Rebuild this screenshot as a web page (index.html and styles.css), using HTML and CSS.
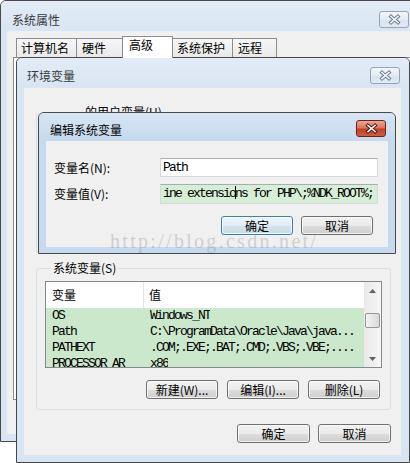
FILE: index.html
```html
<!DOCTYPE html>
<html lang="zh-CN">
<head>
    <meta charset="UTF-8">
    <meta name="viewport" content="width=device-width, initial-scale=1.0">
    <title>编辑系统变量</title>
    <link rel="stylesheet" href="styles.css">
</head>
<body>
<div class="desktop">

    <!-- 系统属性 (inactive, behind) -->
    <div class="window sys-win">
        <div class="titlebar">
            <span class="title">系统属性</span>
            <span class="close-btn">
                <svg width="13" height="11" viewBox="0 0 13 11"><path class="x-edge" d="M3 2.5 L10 8.5 M10 2.5 L3 8.5"/><path class="x-fill" d="M3 2.5 L10 8.5 M10 2.5 L3 8.5"/></svg>
            </span>
        </div>
        <div class="frame">
            <div class="client sys-client">
                <div class="tabs">
                    <span class="tab tab-name">计算机名</span>
                    <span class="tab tab-hw">硬件</span>
                    <span class="tab tab-adv selected">高级</span>
                    <span class="tab tab-prot">系统保护</span>
                    <span class="tab tab-remote">远程</span>
                </div>
                <div class="tab-panel"></div>
            </div>
        </div>
    </div>

    <!-- 环境变量 (inactive, middle) -->
    <div class="window env-win">
        <div class="titlebar">
            <span class="title">环境变量</span>
            <span class="close-btn">
                <svg width="13" height="11" viewBox="0 0 13 11"><path class="x-edge" d="M3 2.5 L10 8.5 M10 2.5 L3 8.5"/><path class="x-fill" d="M3 2.5 L10 8.5 M10 2.5 L3 8.5"/></svg>
            </span>
        </div>
        <div class="frame">
            <div class="client env-client">
                <div class="group user-group">
                    <span class="group-label">的用户变量(U)</span>
                </div>
                <div class="group sys-group">
                    <span class="group-label">系统变量(S)</span>
                    <div class="listbox">
                        <div class="list-main">
                            <div class="list-head">
                                <span class="col-name">变量</span>
                                <span class="col-value">值</span>
                            </div>
                            <div class="list-row">
                                <span class="col-name">OS</span>
                                <span class="col-value">Windows_NT</span>
                            </div>
                            <div class="list-row">
                                <span class="col-name">Path</span>
                                <span class="col-value">C:\ProgramData\Oracle\Java\java...</span>
                            </div>
                            <div class="list-row">
                                <span class="col-name">PATHEXT</span>
                                <span class="col-value">.COM;.EXE;.BAT;.CMD;.VBS;.VBE;....</span>
                            </div>
                            <div class="list-row">
                                <span class="col-name">PROCESSOR_AR</span>
                                <span class="col-value">x86</span>
                            </div>
                        </div>
                        <div class="vscroll">
                            <span class="scroll-arrow">
                                <svg width="7" height="4" viewBox="0 0 7 4"><path d="M0 4 L3.5 0 L7 4Z"/></svg>
                            </span>
                            <span class="scroll-thumb"></span>
                            <span class="scroll-track"></span>
                            <span class="scroll-arrow">
                                <svg width="7" height="4" viewBox="0 0 7 4"><path d="M0 0 L7 0 L3.5 4Z"/></svg>
                            </span>
                        </div>
                    </div>
                    <div class="actions list-actions">
                        <button class="btn" type="button">新建(W)...</button>
                        <button class="btn" type="button">编辑(I)...</button>
                        <button class="btn" type="button">删除(L)</button>
                    </div>
                </div>
                <div class="actions env-actions">
                    <button class="btn wide" type="button">确定</button>
                    <button class="btn wide" type="button">取消</button>
                </div>
            </div>
        </div>
    </div>

    <!-- 编辑系统变量 (active, front) -->
    <div class="window edit-win active">
        <div class="titlebar">
            <span class="title">编辑系统变量</span>
            <span class="close-btn close-active">
                <svg width="13" height="11" viewBox="0 0 13 11"><path class="x-edge" d="M3 2.5 L10 8.5 M10 2.5 L3 8.5"/><path class="x-fill" d="M3 2.5 L10 8.5 M10 2.5 L3 8.5"/></svg>
            </span>
        </div>
        <div class="frame">
            <div class="client edit-client">
                <div class="field-grid">
                    <span class="field-label">变量名(N):</span>
                    <div class="textbox">Path</div>
                    <span class="field-label">变量值(V):</span>
                    <div class="textbox value-box">ine extensio<span class="caret"></span>ns for PHP\;%NDK_ROOT%;</div>
                </div>
                <div class="actions edit-actions">
                    <button class="btn default" type="button">确定</button>
                    <button class="btn" type="button">取消</button>
                </div>
            </div>
        </div>
    </div>

    <div class="watermark">http://blog.csdn.net/</div>
</div>
</body>
</html>
```

FILE: styles.css
```css
html, body {
    margin: 0;
    padding: 0;
    background-color: #ffffff;
    overflow: hidden;
}

body {
    font-family: "Noto Sans CJK SC", "Noto Sans", sans-serif;
    font-size: 12px;
    color: #000;
}

.desktop {
    position: relative;
    width: 410px;
    height: 463px;
    overflow: hidden;
}

/* window chrome */
.window {
    position: absolute;
    box-sizing: border-box;
    display: flex;
    flex-direction: column;
    border: 1px solid #484848;
    border-radius: 6px 6px 0 0;
    background-color: #d8e5f2;
}

.titlebar {
    display: flex;
    align-items: flex-start;
    height: 30px;
    border-radius: 5px 5px 0 0;
    background: linear-gradient(#e3ecf6, #d8e5f2);
}

.title {
    margin-top: 11px;
    padding-left: 10px;
    line-height: 14px;
    color: #3a3a3a;
}

.close-btn {
    box-sizing: border-box;
    display: flex;
    align-items: center;
    justify-content: center;
    width: 30px;
    height: 17px;
    margin: 9px 9px 0 auto;
    border: 1px solid #94a3b5;
    border-radius: 3px;
    background: linear-gradient(#f2f6fa, #e4ebf3 50%, #d9e3ee 51%, #e2e9f2);
}

.x-edge {
    fill: none;
    stroke: #6e7e92;
    stroke-width: 3.6;
    stroke-linecap: square;
}

.x-fill {
    fill: none;
    stroke: #f4f7fb;
    stroke-width: 1.6;
    stroke-linecap: square;
}

.close-active {
    border-color: #6d2018;
    background: linear-gradient(#eaa797, #d8735c 48%, #c23f24 52%, #d15c40);
}

.close-active .x-edge {
    stroke: #4d140c;
}

.close-active .x-fill {
    stroke: #ffffff;
}

.frame {
    flex: 1;
    display: flex;
    padding: 0 8px 7px 7px;
}

.client {
    flex: 1;
    background-color: #f0f0f0;
}

/* 系统属性 */
.sys-win {
    left: 0;
    top: 0;
    width: 420px;
    height: 442px;
}

.sys-win .title {
    margin-top: 12px;
    padding-left: 11px;
}

.sys-win .close-btn {
    margin-top: 10px;
    margin-right: 10px;
}

.sys-win .frame {
    padding-left: 6px;
}

.sys-client {
    padding-top: 7px;
}

.tabs {
    display: flex;
    align-items: flex-end;
    height: 19px;
    margin-left: 9px;
}

.tab {
    position: relative;
    box-sizing: border-box;
    height: 19px;
    margin-right: -1px;
    padding: 2px 0 0 4px;
    line-height: 14px;
    border: 1px solid #898c95;
    border-bottom: none;
    background: linear-gradient(#f7f7f7, #e9e9e9);
}

.tab-name { width: 61px; }
.tab-hw { width: 47px; padding-left: 5px; }
.tab-adv { width: 51px; padding-left: 6px; }
.tab-prot { width: 61px; }
.tab-remote { width: 45px; padding-left: 5px; }

.tab.selected {
    z-index: 1;
    height: 22px;
    margin-bottom: -1px;
    padding-top: 1px;
    background: #ffffff;
}

.tab-panel {
    box-sizing: border-box;
    height: 343px;
    margin-left: 6px;
    border: 1px solid #898c95;
    background-color: #ffffff;
}

/* 环境变量 */
.env-win {
    left: 16px;
    top: 57px;
    width: 394px;
    height: 406px;
}

.env-client {
    padding: 0 10px 0 12px;
}

.group {
    box-sizing: border-box;
    border: 1px solid #d5dfe5;
    border-radius: 3px;
}

.group-label {
    display: block;
    width: max-content;
    line-height: 14px;
    background-color: #f0f0f0;
}

.user-group {
    height: 140px;
    margin-top: 25px;
}

.user-group .group-label {
    margin: -9px 0 0 48px;
}

.sys-group {
    margin-top: 15px;
    padding: 0 8px 10px 8px;
}

.sys-group .group-label {
    margin: -8px 0 0 6px;
    padding: 0 2px;
}

.listbox {
    box-sizing: border-box;
    display: flex;
    height: 87px;
    margin-top: 6px;
    border: 1px solid #828790;
    background-color: #ffffff;
    overflow: hidden;
}

.list-main {
    flex: 1;
    overflow: hidden;
}

.list-head {
    display: flex;
    height: 26px;
    line-height: 26px;
    background-color: #ffffff;
}

.list-row {
    display: flex;
    height: 16px;
    line-height: 16px;
    background-color: #cce8cc;
    font-family: "Liberation Mono", "DejaVu Sans Mono", monospace;
    font-size: 13px;
    letter-spacing: -1.8px;
    white-space: nowrap;
}

.col-name {
    box-sizing: border-box;
    width: 98px;
    padding-left: 6px;
    overflow: hidden;
}

.col-value {
    padding-left: 6px;
    overflow: hidden;
}

.list-head .col-name {
    border-right: 1px solid #e5e5e5;
}

.list-head .col-value {
    padding-left: 5px;
}

.vscroll {
    display: flex;
    flex-direction: column;
    width: 17px;
    background: linear-gradient(to right, #e9e9e9, #f6f6f6);
}

.scroll-arrow {
    display: flex;
    align-items: center;
    justify-content: center;
    height: 17px;
}

.scroll-arrow svg {
    fill: #606060;
}

.scroll-thumb {
    box-sizing: border-box;
    height: 15px;
    margin: 14px 1px 0 1px;
    border: 1px solid #979797;
    border-radius: 2px;
    background: linear-gradient(to right, #f4f4f4, #e6e6e6 50%, #dadada);
}

.scroll-track {
    flex: 1;
}

/* buttons */
.actions {
    display: flex;
    justify-content: flex-end;
}

.btn {
    box-sizing: border-box;
    width: 72px;
    height: 19px;
    padding: 0;
    border: 1px solid #707070;
    border-radius: 3px;
    background: linear-gradient(#f2f2f2 0%, #ebebeb 50%, #dddddd 51%, #cfcfcf 100%);
    box-shadow: inset 0 0 0 1px rgba(255, 255, 255, 0.7);
    font-family: "Noto Sans CJK SC", "Noto Sans", sans-serif;
    font-size: 12px;
    line-height: 17px;
    color: #000;
}

.btn.wide {
    width: 73px;
}

.btn.default {
    border-color: #3c7fb1;
    background: linear-gradient(#eef5fa 0%, #e3edf5 50%, #d4e3ef 51%, #c8dcea 100%);
}

.list-actions {
    gap: 9px;
    margin: 12px 2px 0 0;
}

.env-actions {
    gap: 8px;
    margin-top: 14px;
}

/* 编辑系统变量 */
.edit-win {
    left: 38px;
    top: 112px;
    width: 358px;
    height: 142px;
    background-color: #c6d9ee;
}

.edit-win .titlebar {
    height: 28px;
    background: linear-gradient(#d7e5f4, #c6d9ee);
}

.edit-win .title {
    margin-top: 10px;
    padding-left: 11px;
    color: #000;
}

.edit-win .close-btn {
    margin-top: 7px;
}

.edit-win .frame {
    padding: 0 7px 6px 7px;
}

.edit-client {
    padding: 17px 0 0 8px;
}

.field-grid {
    display: grid;
    grid-template-columns: 106px 218px;
    grid-template-rows: 19px 20px;
    row-gap: 7px;
    align-items: center;
}

.field-label {
    line-height: 14px;
}

.textbox {
    box-sizing: border-box;
    height: 100%;
    padding-left: 2px;
    border: 1px solid #d4d9e0;
    border-top-color: #abadb3;
    background-color: #ffffff;
    font-family: "Liberation Mono", "DejaVu Sans Mono", monospace;
    font-size: 13px;
    letter-spacing: -1.8px;
    line-height: 17px;
    white-space: nowrap;
    overflow: hidden;
}

.value-box {
    line-height: 18px;
    background-color: #d6eed6;
}

.caret {
    display: inline-block;
    width: 1px;
    height: 13px;
    margin-right: -1px;
    vertical-align: -2px;
    background-color: #000;
}

.edit-actions {
    gap: 8px;
    width: 319px;
    margin-top: 12px;
}

.watermark {
    position: absolute;
    left: 110px;
    top: 231px;
    z-index: 5;
    font-family: "Liberation Serif", serif;
    font-size: 20px;
    line-height: 20px;
    letter-spacing: 2.3px;
    color: rgba(140, 140, 140, 0.35);
    white-space: nowrap;
}
```
